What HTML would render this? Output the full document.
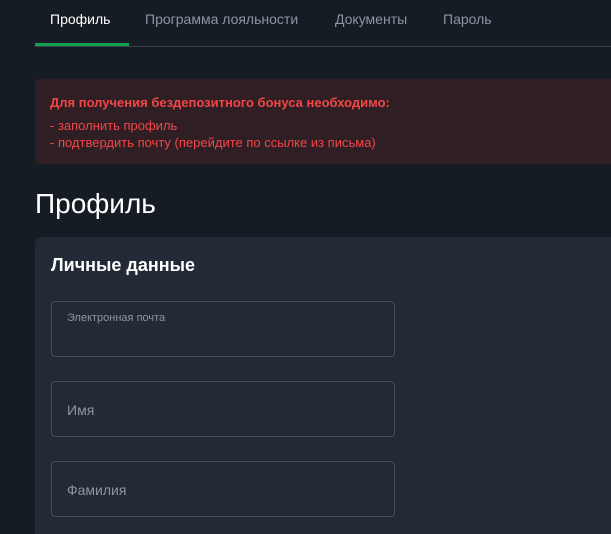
<!DOCTYPE html>
<html><head><meta charset="utf-8"><style>
*{margin:0;padding:0;box-sizing:border-box}
html,body{width:611px;height:534px;overflow:hidden}
body{background:#161c24;font-family:"Liberation Sans","DejaVu Sans",sans-serif;position:relative}
.tabs{position:absolute;left:35px;top:0;right:0;height:47px;border-bottom:1px solid #3a424c}
.tab{position:absolute;top:11px;font-size:14px;color:#8c96a3}
.act{color:#fff}
.ul{position:absolute;left:0;top:43px;width:94px;height:3px;background:#12a150}
.alert{position:absolute;left:35px;top:79px;width:600px;height:85px;background:#2f1f25;border-radius:4px;color:#f24646;font-size:13px}
.alert b{position:absolute;left:15px;top:16px}
.alert span{position:absolute;left:15px}
h1{position:absolute;left:35px;top:188px;font-size:28px;font-weight:normal;color:#fff}
.card{position:absolute;left:35px;top:237px;width:600px;height:297px;background:#212a35;border-radius:6px 6px 0 0}
h2{position:absolute;left:16px;top:18px;font-size:18px;color:#fff}
.in{position:absolute;left:16px;width:344px;height:56px;border:1px solid #434c57;border-radius:4px;color:#8c96a3}
</style></head><body>
<div class="tabs">
<div class="tab act" style="left:15px">Профиль</div>
<div class="tab" style="left:110px">Программа лояльности</div>
<div class="tab" style="left:300px">Документы</div>
<div class="tab" style="left:408px">Пароль</div>
<div class="ul"></div>
</div>
<div class="alert"><b>Для получения бездепозитного бонуса необходимо:</b>
<span style="top:39px">- заполнить профиль</span>
<span style="top:56px">- подтвердить почту (перейдите по ссылке из письма)</span></div>
<h1>Профиль</h1>
<div class="card"><h2>Личные данные</h2>
<div class="in" style="top:64px"><span style="position:absolute;left:15px;top:10px;font-size:11px">Электронная почта</span></div>
<div class="in" style="top:144px"><span style="position:absolute;left:15px;top:20px;font-size:14px">Имя</span></div>
<div class="in" style="top:224px"><span style="position:absolute;left:15px;top:20px;font-size:14px">Фамилия</span></div>
</div>
</body></html>
